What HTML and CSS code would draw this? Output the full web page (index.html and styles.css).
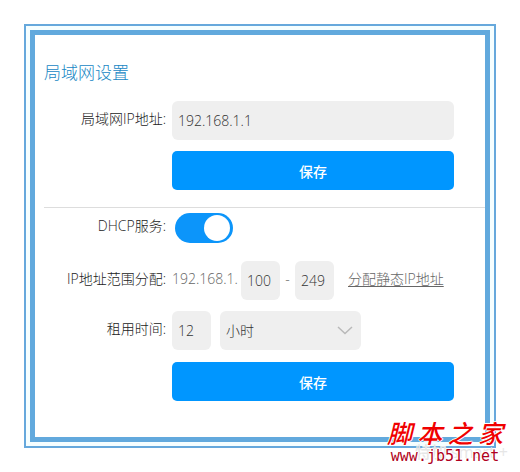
FILE: index.html
```html
<!DOCTYPE html>
<html lang="zh-CN">
<head>
    <meta charset="UTF-8">
    <meta name="viewport" content="width=device-width, initial-scale=1.0">
    <title>局域网设置</title>
    <link rel="stylesheet" href="styles.css">
</head>
<body>
    <div class="frame">
        <main class="panel">
            <h1>局域网设置</h1>
            <form class="lan-form">
                <div class="row">
                    <label class="name" for="lan-ip">局域网IP地址:</label>
                    <input class="field" type="text" id="lan-ip" value="192.168.1.1">
                </div>
                <button class="save" type="button">保存</button>
            </form>
            <form class="dhcp-form">
                <div class="row switch-row">
                    <label class="name" for="dhcp">DHCP服务:</label>
                    <input class="switch" type="checkbox" id="dhcp" checked>
                </div>
                <div class="row">
                    <label class="name" for="range-start">IP地址范围分配:</label>
                    <div class="range">
                        <span class="prefix">192.168.1.</span>
                        <input class="field small" type="text" id="range-start" value="100">
                        <span class="dash">-</span>
                        <input class="field small" type="text" id="range-end" aria-label="结束地址" value="249">
                        <a class="static-link" href="#">分配静态IP地址</a>
                    </div>
                </div>
                <div class="row">
                    <label class="name" for="lease">租用时间:</label>
                    <div class="lease">
                        <input class="field small" type="text" id="lease" value="12">
                        <div class="select-box">
                            <select class="field" aria-label="时间单位">
                                <option>小时</option>
                            </select>
                            <svg class="arrow" viewBox="0 0 16 9" width="16" height="9">
                                <path d="M1 1l7 6.5L15 1" fill="none" stroke="#b9b9b9" stroke-width="1.5"/>
                            </svg>
                        </div>
                    </div>
                </div>
                <button class="save" type="button">保存</button>
            </form>
        </main>
        <div class="ghost-mark">特加 smart +</div>
        <div class="watermark">
            <div class="site-name"><span>脚</span><span>本</span><span>之</span><span>家</span></div>
            <div class="site-url">www.jb51.net</div>
        </div>
    </div>
</body>
</html>
```

FILE: styles.css
```css
* {
    box-sizing: border-box;
}
body {
    margin: 0;
    padding: 24px;
    background: #fff;
    color: #555;
    font-family: "Open Sans", "Noto Sans CJK SC", sans-serif;
    font-size: 14px;
    font-weight: 300;
}
.frame {
    position: relative;
    padding: 4px;
    border: 2px solid #66a8dc;
    background: #f5feff;
}
.panel {
    padding: 26px 0 36px 9px;
    border: 5px solid #62a9dd;
    background: #fff;
}
h1 {
    margin: 0 0 16px;
    color: #1787c4;
    font-size: 17px;
    font-weight: 300;
    line-height: 24px;
}
.lan-form {
    padding-bottom: 17px;
    border-bottom: 1px solid #ddd;
}
.dhcp-form {
    padding-top: 5px;
}
.row {
    display: grid;
    grid-template-columns: 122px 1fr;
    column-gap: 6px;
    margin-bottom: 11px;
    padding-right: 31px;
}
.name {
    color: #222;
    line-height: 36px;
    text-align: right;
    white-space: nowrap;
}
.field {
    width: 100%;
    height: 39px;
    padding: 0 6px;
    border: none;
    border-radius: 6px;
    background: #efefef;
    color: #333;
    font: inherit;
}
.small {
    width: 39px;
    flex: none;
}
.save {
    display: block;
    width: calc(100% - 159px);
    height: 39px;
    margin-left: 128px;
    border: none;
    border-radius: 5px;
    background: #0096ff;
    color: #fff;
    font: inherit;
    font-weight: 500;
    cursor: pointer;
}
.switch-row {
    margin-bottom: 18px;
}
.switch-row .name {
    line-height: 26px;
}
.switch {
    appearance: none;
    display: flex;
    justify-content: flex-end;
    width: 58px;
    height: 30px;
    margin: 0 3px;
    padding: 2px 3px;
    border-radius: 15px;
    background: #0c95fa;
    cursor: pointer;
}
.switch::before {
    content: "";
    width: 26px;
    height: 26px;
    border-radius: 50%;
    background: #fff;
}
.switch:not(:checked) {
    justify-content: flex-start;
    background: #ccc;
}
.range, .lease {
    display: flex;
}
.lease {
    padding-bottom: 1px;
}
.range {
    color: #666;
    line-height: 36px;
    white-space: nowrap;
}
.prefix {
    width: 69px;
}
.dash {
    width: 15px;
    text-align: center;
}
.static-link {
    margin-left: 14px;
    color: #666;
    text-underline-offset: 2px;
}
.select-box {
    position: relative;
    width: 141px;
    margin-left: 9px;
}
.select-box .field {
    appearance: none;
}
.arrow {
    position: absolute;
    top: 15px;
    right: 8px;
    pointer-events: none;
}
.ghost-mark {
    position: absolute;
    right: -14px;
    bottom: -16px;
    color: #e6e6e6;
    font-size: 16px;
    font-weight: 500;
    line-height: 20px;
    white-space: nowrap;
}
.watermark {
    position: absolute;
    right: -9px;
    bottom: -18px;
    width: 116px;
    text-shadow: 1px 0 #fff, -1px 0 #fff, 0 1px #fff, 0 -1px #fff;
}
.site-name {
    display: flex;
    justify-content: space-between;
    color: #f00000;
    font-size: 25px;
    font-weight: 500;
    font-style: italic;
    line-height: 30px;
}
.site-url {
    color: #b00020;
    font-family: "DejaVu Sans Mono", monospace;
    font-size: 15px;
    line-height: 16px;
    text-align: center;
}
```
